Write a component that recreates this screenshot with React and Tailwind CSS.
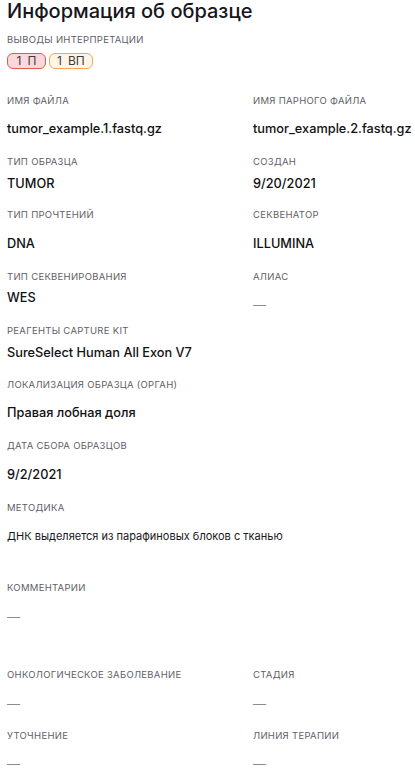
import React from "react";

const rows = [
  {
    mt: "mt-[26px]",
    cells: [
      { label: "Имя файла", value: "tumor_example.1.fastq.gz", vmt: "mt-[14px]" },
      { label: "Имя парного файла", value: "tumor_example.2.fastq.gz", vmt: "mt-[14px]" },
    ],
  },
  {
    mt: "mt-[19px]",
    cells: [
      { label: "Тип образца", value: "TUMOR", vmt: "mt-[8px]" },
      { label: "Создан", value: "9/20/2021", vmt: "mt-[8px]" },
    ],
  },
  {
    mt: "mt-[17px]",
    cells: [
      { label: "Тип прочтений", value: "DNA", vmt: "mt-[15px]" },
      { label: "Секвенатор", value: "ILLUMINA", vmt: "mt-[15px]" },
    ],
  },
  {
    mt: "mt-[19px]",
    cells: [
      { label: "Тип секвенирования", value: "WES", vmt: "mt-[7px]" },
      { label: "Алиас", value: "—", vmt: "mt-[14px]", empty: true },
    ],
  },
  {
    mt: "mt-[12px]",
    cells: [{ label: "Реагенты Capture Kit", value: "SureSelect Human All Exon V7", vmt: "mt-[8px]" }],
  },
  {
    mt: "mt-[18px]",
    cells: [{ label: "Локализация образца (орган)", value: "Правая лобная доля", vmt: "mt-[14px]" }],
  },
  {
    mt: "mt-[19px]",
    cells: [{ label: "Дата сбора образцов", value: "9/2/2021", vmt: "mt-[15px]" }],
  },
  {
    mt: "mt-[19px]",
    cells: [
      {
        label: "Методика",
        value: "ДНК выделяется из парафиновых блоков с тканью",
        vmt: "mt-[14px]",
        plain: true,
      },
    ],
  },
  {
    mt: "mt-[38px]",
    cells: [{ label: "Комментарии", value: "—", vmt: "mt-[15px]", empty: true }],
  },
  {
    mt: "mt-[44px]",
    cells: [
      { label: "Онкологическое заболевание", value: "—", vmt: "mt-[15px]", empty: true },
      { label: "Стадия", value: "—", vmt: "mt-[15px]", empty: true },
    ],
  },
  {
    mt: "mt-[18px]",
    cells: [
      { label: "Уточнение", value: "—", vmt: "mt-[14px]", empty: true },
      { label: "Линия терапии", value: "—", vmt: "mt-[14px]", empty: true },
    ],
  },
];

const Field = ({ label, value, vmt, empty, plain }) => {
  return (
    <div className="flex flex-col">
      <span className="text-[9.5px] leading-[12px] uppercase tracking-[0.03em] text-[#5f6068] whitespace-nowrap">
        {label}
      </span>
      <span
        className={
          vmt +
          " leading-[16px] whitespace-nowrap " +
          (empty
            ? "text-[13px] text-[#8a8b92]"
            : plain
            ? "text-[11px] text-[#17171c]"
            : "text-[12.75px] font-medium text-[#111114]")
        }
      >
        {value}
      </span>
    </div>
  );
};

const App = () => {
  return (
    <section
      className="w-[415px] h-[770px] overflow-hidden bg-white px-[7px]"
      style={{ fontFamily: "Inter, 'Noto Sans', sans-serif" }}
    >
      <h1 className="text-[20px] leading-[22px] font-medium text-[#16161b]">
        Информация об образце
      </h1>
      <div className="mt-[12px] text-[9.5px] leading-[12px] uppercase tracking-[0.03em] text-[#5f6068]">
        Выводы интерпретации
      </div>
      <div className="mt-[7px] flex gap-[3px]">
        <span className="h-[16px] min-w-[39px] px-[8px] flex items-center justify-center gap-[6px] rounded-[6px] border border-[#e25a4f] bg-[#fad7dc] text-[12px] text-[#3a3a40]">
          <span>1</span>
          <span>П</span>
        </span>
        <span className="h-[16px] min-w-[39px] px-[7px] flex items-center justify-center gap-[6px] rounded-[6px] border border-[#f2a562] bg-[#fff5e6] text-[12px] text-[#3a3a40]">
          <span>1</span>
          <span>ВП</span>
        </span>
      </div>
      {rows.map((row, i) => (
        <div key={i} className={row.mt + " grid grid-cols-[246px_1fr]"}>
          {row.cells.map((cell) => (
            <Field key={cell.label} {...cell} />
          ))}
        </div>
      ))}
    </section>
  );
};

export default App;
